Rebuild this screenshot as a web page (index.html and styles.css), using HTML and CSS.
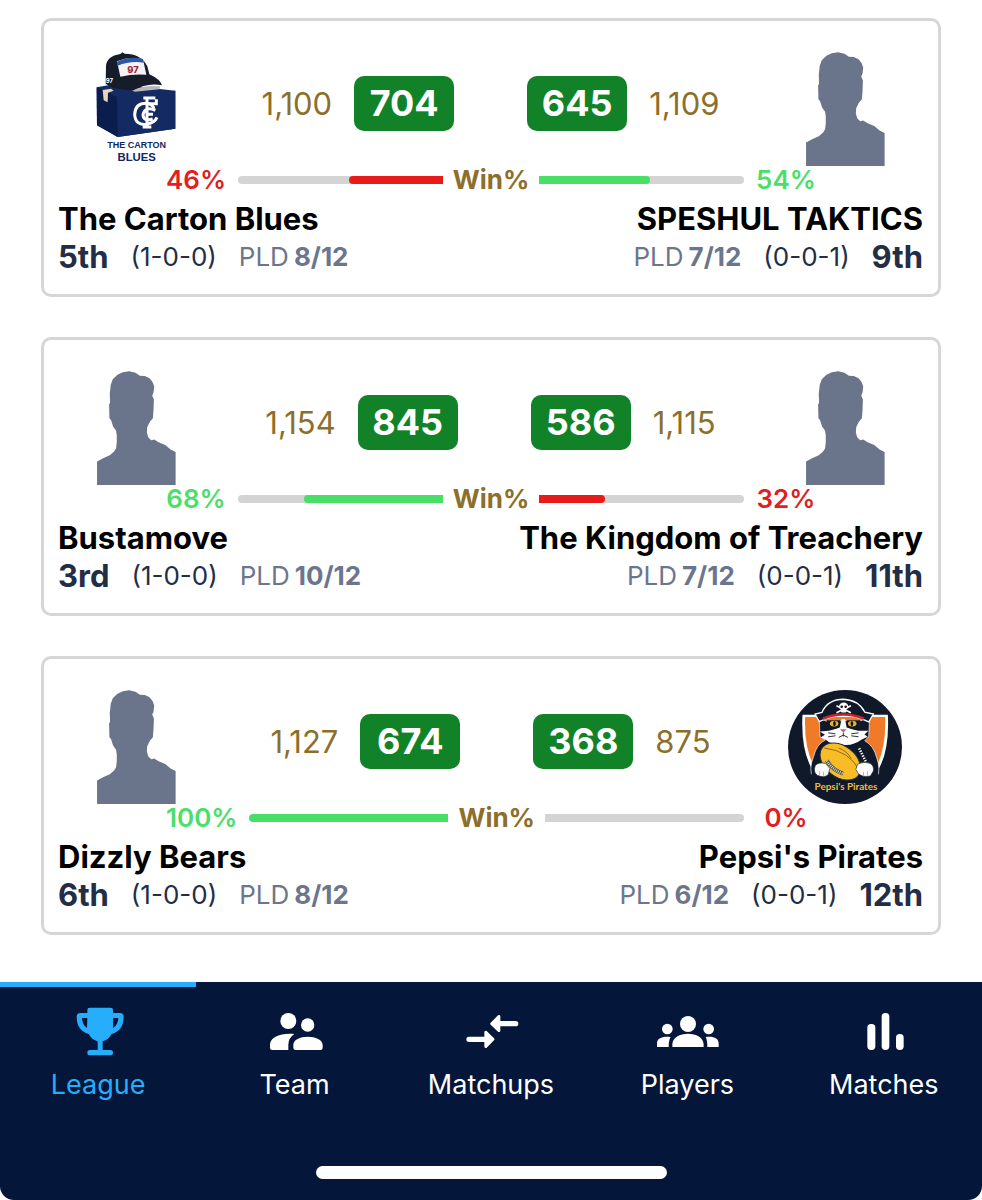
FILE: index.html
```html
<!DOCTYPE html>
<html lang="en">
<head>
<meta charset="utf-8">
<meta name="viewport" content="width=device-width, initial-scale=1">
<title>League matchups</title>
<link rel="stylesheet" href="styles.css">
</head>
<body>
<svg class="defs" aria-hidden="true">
  <symbol id="person" viewBox="50 37 236 341">
    <path d="M50 378V308L68 298 88 289 101 278 107 268 109 250V230L107 216 98 203 92 184 87 178 86 137 89 132 88 106 91 78 97 62 111 48 127 41 146 38 165 42 178 51 193 52 207 59 216 70 221 83 219 101 215 110 220 122 219 153 217 178 208 189 200 205 199 221 203 235 212 244 221 242 234 250 254 258 270 272 285 279V378Z"/>
  </symbol>
</svg>
<main class="matches">
  <article class="card">
    <div class="top">
      <div class="avatar">
        <svg class="logo" viewBox="-18 36 342 342" role="img" aria-label="The Carton Blues logo">
          <path fill="#142b63" d="M35 142 90 132 271 152 271 266 98 291 36 256Z"/>
          <path fill="#132b62" d="M96 171 271 152V266L98 291Z"/>
          <path fill="#0a1d4c" d="M35 142 96 171 98 291 36 256Z"/>
          <path fill="#e9d5b8" d="M53 150 78 146 86 152 69 158 68 187 56 181Z"/>
          <path fill="#b9b7b8" d="M138 151Q180 134 226 139L223 148 150 155Z"/>
          <path fill="#161c2a" d="M62 131 63 78Q65 48 106 42L112 37 119 41Q169 41 187 79L193 103Q226 118 231 136 190 126 142 152L105 147Q82 145 62 131Z"/>
          <path fill="#f5f3f5" d="M96 64Q133 48 174 58L184 104Q144 101 106 110Z"/>
          <path fill="#2f58a4" d="M95 66Q134 47 174 57L176 68Q136 62 98 77Z"/>
          <text x="144" y="99" class="cap-number">97</text>
          <text x="73" y="129" class="cap-side">97</text>
          <g fill="none" stroke="#fff" stroke-width="9">
            <path d="M207 207Q201 190 183 190 151 190 149 223 151 256 183 253 209 249 216 232"/>
            <path d="M211 211Q180 197 174 224 175 246 203 237M186 170V262M175 174H211M173 261H199M188 191H214V178M184 223H204"/>
          </g>
          <text x="155" y="325" class="carton-small">THE CARTON</text>
          <text x="155" y="363" class="carton-big">BLUES</text>
        </svg>
      </div>
      <div class="scores">
        <span class="projected">1,100</span><strong class="score">704</strong>
        <strong class="score away">645</strong><span class="projected">1,109</span>
      </div>
      <div class="avatar"><svg class="person" role="img" aria-label="SPESHUL TAKTICS"><use href="#person"/></svg></div>
    </div>
    <div class="win">
      <span class="percent bad">46%</span>
      <div class="track home"><div class="fill bad-fill" style="width:46%"></div></div>
      <span class="win-label">Win%</span>
      <div class="track"><div class="fill good-fill" style="width:54%"></div></div>
      <span class="percent good">54%</span>
    </div>
    <div class="names"><h2>The Carton Blues</h2><h2>SPESHUL TAKTICS</h2></div>
    <div class="stats">
      <div class="team"><strong class="rank">5th</strong><span>(1-0-0)</span><span class="played">PLD <b>8/12</b></span></div>
      <div class="team"><span class="played">PLD <b>7/12</b></span><span>(0-0-1)</span><strong class="rank">9th</strong></div>
    </div>
  </article>

  <article class="card">
    <div class="top">
      <div class="avatar"><svg class="person" role="img" aria-label="Bustamove"><use href="#person"/></svg></div>
      <div class="scores">
        <span class="projected">1,154</span><strong class="score">845</strong>
        <strong class="score away">586</strong><span class="projected">1,115</span>
      </div>
      <div class="avatar"><svg class="person" role="img" aria-label="The Kingdom of Treachery"><use href="#person"/></svg></div>
    </div>
    <div class="win">
      <span class="percent good">68%</span>
      <div class="track home"><div class="fill good-fill" style="width:68%"></div></div>
      <span class="win-label">Win%</span>
      <div class="track"><div class="fill bad-fill" style="width:32%"></div></div>
      <span class="percent bad">32%</span>
    </div>
    <div class="names"><h2>Bustamove</h2><h2>The Kingdom of Treachery</h2></div>
    <div class="stats">
      <div class="team"><strong class="rank">3rd</strong><span>(1-0-0)</span><span class="played">PLD <b>10/12</b></span></div>
      <div class="team"><span class="played">PLD <b>7/12</b></span><span>(0-0-1)</span><strong class="rank">11th</strong></div>
    </div>
  </article>

  <article class="card">
    <div class="top">
      <div class="avatar"><svg class="person" role="img" aria-label="Dizzly Bears"><use href="#person"/></svg></div>
      <div class="scores">
        <span class="projected">1,127</span><strong class="score">674</strong>
        <strong class="score away">368</strong><span class="projected">875</span>
      </div>
      <div class="avatar">
        <svg class="logo" viewBox="24 30 346 346" role="img" aria-label="Pepsi's Pirates logo">
          <circle cx="197" cy="203" r="173" fill="#10192a"/>
          <path fill="#fff" d="M68 105H327Q333 220 293 280L197 296 103 280Q62 220 68 105Z"/>
          <path fill="#f07a28" d="M76 112H319Q322 215 286 274L197 290 110 274Q72 215 76 112Z"/>
          <path fill="#10192a" stroke="#fff" stroke-width="2" d="M100 300Q86 270 101 234 111 193 137 182L121 171 119 116 139 124 246 123 272 111 269 171 257 184Q284 198 294 238 305 269 295 300Z"/>
          <path fill="#10192a" d="M86 286H310V306H86Z"/>
          <path fill="#fff" d="M121 156 148 154 160 151 181 144 187 118H197L202 144 224 151 237 154 268 154 256 165 266 172 248 180Q220 200 192 196 157 199 140 182L123 174 136 166Z"/>
          <path fill="#10192a" d="M141 122 183 122 179 142Q164 154 147 144ZM202 122 244 122 238 144Q220 153 205 142Z"/>
          <ellipse cx="164" cy="132" rx="13" ry="9" fill="#e3b42d"/><ellipse cx="219" cy="132" rx="13" ry="9" fill="#e3b42d"/>
          <ellipse cx="165" cy="132" rx="4" ry="8" fill="#111"/><ellipse cx="218" cy="132" rx="4" ry="8" fill="#111"/>
          <path fill="#dc5960" d="M182 149H201L192 160Z"/>
          <path fill="none" stroke="#303034" stroke-width="3" d="M192 160V171M192 167 178 174M192 167 206 174M168 163 146 160M168 169 146 172M216 163 238 160M216 169 238 172"/>
          <path fill="#10192a" stroke="#fff" stroke-width="4" d="M106 103 127 98Q144 58 193 58 239 61 257 97L283 103 269 127Q191 89 119 126Z"/>
          <path fill="none" stroke="#c92233" stroke-width="8" d="M130 117Q193 92 254 117"/>
          <path stroke="#fff" stroke-width="5" d="M171 78 215 99M171 99 215 78"/>
          <ellipse cx="193" cy="80" rx="14" ry="12" fill="#fff"/><rect x="185" y="88" width="16" height="10" rx="3" fill="#fff"/>
          <circle cx="187" cy="81" r="4" fill="#111"/><circle cx="199" cy="81" r="4" fill="#111"/>
          <ellipse cx="183" cy="247" rx="69" ry="47" transform="rotate(38 183 247)" fill="#f8bd25" stroke="#263047" stroke-width="3"/>
          <path fill="none" stroke="#8a6820" stroke-width="3" d="M134 206Q213 215 241 276M178 206Q202 214 216 238"/>
          <path fill="none" stroke="#44505b" stroke-width="12" d="M142 244Q155 270 191 284"/>
          <path fill="none" stroke="#d7d4bb" stroke-width="8" stroke-dasharray="3 3" d="M142 244Q155 270 191 284"/>
          <path fill="none" stroke="#fff" stroke-width="8" stroke-dasharray="4 4" d="M240 207 261 249"/>
          <path fill="#fff" stroke="#222d3e" stroke-width="2" d="M107 259Q117 248 138 253L151 268 146 287Q134 298 113 289 99 279 107 259ZM235 255Q253 246 272 252 286 259 283 276L274 291Q251 296 238 284L230 271Z"/>
          <path stroke="#8e939b" stroke-width="2" d="M120 277V290M132 278V291M253 278V292M265 277V290"/>
          <text x="200" y="334" class="pirate-name">Pepsi's Pirates</text>
        </svg>
      </div>
    </div>
    <div class="win">
      <span class="percent good">100%</span>
      <div class="track home"><div class="fill good-fill" style="width:100%"></div></div>
      <span class="win-label">Win%</span>
      <div class="track"><div class="fill bad-fill" style="width:0%"></div></div>
      <span class="percent bad">0%</span>
    </div>
    <div class="names"><h2>Dizzly Bears</h2><h2>Pepsi's Pirates</h2></div>
    <div class="stats">
      <div class="team"><strong class="rank">6th</strong><span>(1-0-0)</span><span class="played">PLD <b>8/12</b></span></div>
      <div class="team"><span class="played">PLD <b>6/12</b></span><span>(0-0-1)</span><strong class="rank">12th</strong></div>
    </div>
  </article>
</main>
<footer class="bottom">
  <nav class="tabs">
    <a href="#league" class="tab active" aria-current="page">
      <svg viewBox="199 102 192 168" aria-hidden="true">
        <path d="M263 120Q263 113 270 113H333Q340 113 340 120V129H361Q372 129 372 141 372 181 336 192 326 210 309 214V240H332Q340 240 340 248 340 256 332 256H271Q263 256 263 248 263 240 271 240H294V214Q277 210 267 192 231 181 231 141 231 129 242 129H263ZM263 144H247Q248 165 262 174ZM340 144V174Q355 165 356 144Z" fill-rule="evenodd"/>
      </svg><span>League</span></a>
    <a href="#team" class="tab">
      <svg viewBox="788 102 192 168" aria-hidden="true"><circle cx="864" cy="153" r="24"/><circle cx="922" cy="165" r="20"/><path d="M882 192Q864 204 864 224V240H816Q809 240 809 233V224C809 202 841 188 882 192ZM922 200C945 200 967 209 967 225V233Q967 240 960 240H886Q879 240 879 233V225C879 209 899 200 922 200Z"/></svg><span>Team</span></a>
    <a href="#matchups" class="tab">
      <svg viewBox="57 42 192 168" aria-hidden="true"><path d="M181 79V93H227Q235 93 235 101T227 109H181V123Q179 128 174 125L152 104Q149 101 152 98L174 76Q180 73 181 79ZM133 126V140H87Q79 140 79 148T87 156H133V170Q135 176 140 173L162 151Q165 148 162 145L140 123Q134 121 133 126Z"/></svg><span>Matchups</span></a>
    <a href="#players" class="tab">
      <svg viewBox="647 42 192 168" aria-hidden="true"><circle cx="746" cy="102" r="24"/><circle cx="684" cy="117" r="16"/><circle cx="808" cy="117" r="16"/><path d="M699 171V164C699 142 722 131 746 131S793 142 793 164V171ZM653 171V160C653 145 669 138 694 141Q688 150 688 171ZM838 171V160C838 145 823 138 799 141Q804 150 804 171Z"/></svg><span>Players</span></a>
    <a href="#matches" class="tab">
      <svg viewBox="95 42 192 168" aria-hidden="true"><rect x="141" y="102" width="24" height="78" rx="11"/><rect x="184" y="69" width="23" height="111" rx="11"/><rect x="227" y="132" width="23" height="48" rx="11"/></svg><span>Matches</span></a>
  </nav>
  <div class="home-bar"></div>
</footer>
</body>
</html>
```
FILE: styles.css
```css
* { box-sizing: border-box; }
body {
  display: flex;
  flex-direction: column;
  min-height: 100vh;
  margin: 0;
  background: #fff;
  color: #232d45;
  font-family: Inter, "Liberation Sans", sans-serif;
}
.defs { position: absolute; width: 0; height: 0; }
.matches {
  display: flex;
  flex-direction: column;
  flex: 1;
  gap: 40px;
  padding: 18px 41px 44px;
}
.card {
  padding: 31px 15px 18px 14px;
  border: 3px solid #d6d6d6;
  border-radius: 10px;
}
.top, .scores, .win, .names, .stats, .team { display: flex; align-items: center; }
.top { justify-content: space-between; height: 114px; }
.avatar { display: flex; flex: none; justify-content: center; width: 156px; }
.logo { width: 114px; height: 114px; }
.person { width: 79px; height: 114px; fill: #6a748b; }
.scores { gap: 22px; padding-bottom: 12px; }
.projected { color: #8c6f2a; font-size: 31px; font-weight: 400; }
.score {
  min-width: 100px;
  border-radius: 10px;
  background: #128228;
  color: #fff;
  font-size: 36px;
  font-weight: 700;
  line-height: 55px;
  text-align: center;
}
.away { margin-left: 51px; }
.win {
  padding: 0 107px 0 108px;
  font-size: 26px;
  font-weight: 600;
  line-height: 27px;
}
.percent { min-width: 60px; text-align: center; }
.good { color: #4ade6a; }
.bad { color: #df1f22; }
.track {
  display: flex;
  flex: 1;
  height: 8px;
  margin-right: 12px;
  overflow: hidden;
  border-radius: 0 4px 4px 0;
  background: #d4d4d4;
}
.home { justify-content: flex-end; margin: 0 0 0 12px; border-radius: 4px 0 0 4px; }
.fill { border-radius: 0 4px 4px 0; }
.home .fill { border-radius: 4px 0 0 4px; }
.good-fill { background: #48df67; }
.bad-fill { background: #e81b1b; }
.win-label { padding: 0 10px; color: #8c6f2a; font-weight: 700; }
.names { justify-content: space-between; margin-top: 6px; }
h2 { margin: 0; color: #000; font-size: 31px; font-weight: 700; line-height: 39px; }
.stats { justify-content: space-between; font-size: 26px; line-height: 38px; }
.team { gap: 22px; }
.rank { font-size: 31px; font-weight: 700; }
.played { display: flex; gap: 5px; color: #6b768e; }
.played b { font-weight: 700; }
.bottom {
  padding-bottom: 21px;
  border-radius: 0 0 14px 14px;
  background: #041639;
}
.tabs { display: grid; grid-template-columns: repeat(5, 1fr); }
.tab {
  display: flex;
  flex-direction: column;
  align-items: center;
  gap: 8px;
  padding-top: 17px;
  border-top: 5px solid transparent;
  color: #fff;
  font-size: 27px;
  line-height: 34px;
  text-decoration: none;
}
.tab svg { width: 64px; height: 56px; fill: currentColor; }
.active { border-color: #27aefb; color: #27aefb; }
.home-bar {
  width: 36%;
  max-width: 351px;
  height: 13px;
  margin: 64px auto 0;
  border-radius: 7px;
  background: #fff;
}
.cap-number { fill: #a5293b; font: 800 28px Inter, sans-serif; text-anchor: middle; }
.cap-side { fill: #fff; font: 700 18px Inter, sans-serif; text-anchor: middle; }
.carton-small { fill: #12295e; font: 700 27px "Liberation Sans", sans-serif; text-anchor: middle; }
.carton-big { fill: #12295e; font: 700 34px "Liberation Sans", sans-serif; text-anchor: middle; }
.pirate-name { fill: #edbd3b; font: 700 30px Lato, sans-serif; text-anchor: middle; }
```
